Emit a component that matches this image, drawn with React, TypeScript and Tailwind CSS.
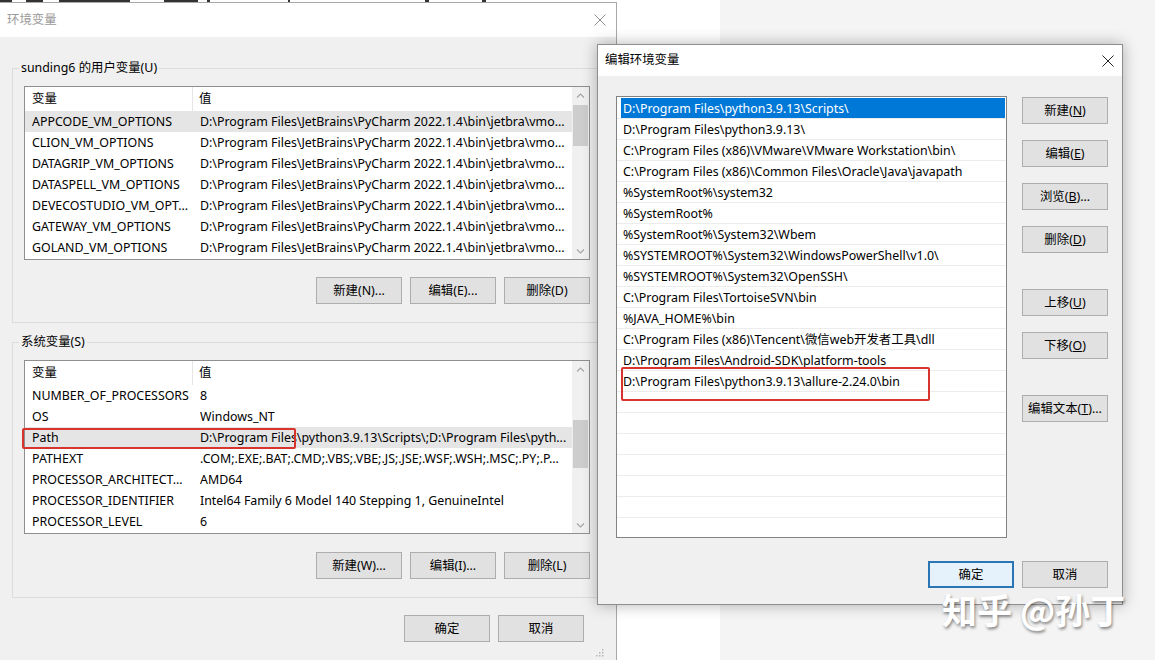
import React from "react";

const userRows: [string, string][] = [
  ["APPCODE_VM_OPTIONS", "D:\\Program Files\\JetBrains\\PyCharm 2022.1.4\\bin\\jetbra\\vmo..."],
  ["CLION_VM_OPTIONS", "D:\\Program Files\\JetBrains\\PyCharm 2022.1.4\\bin\\jetbra\\vmo..."],
  ["DATAGRIP_VM_OPTIONS", "D:\\Program Files\\JetBrains\\PyCharm 2022.1.4\\bin\\jetbra\\vmo..."],
  ["DATASPELL_VM_OPTIONS", "D:\\Program Files\\JetBrains\\PyCharm 2022.1.4\\bin\\jetbra\\vmo..."],
  ["DEVECOSTUDIO_VM_OPT...", "D:\\Program Files\\JetBrains\\PyCharm 2022.1.4\\bin\\jetbra\\vmo..."],
  ["GATEWAY_VM_OPTIONS", "D:\\Program Files\\JetBrains\\PyCharm 2022.1.4\\bin\\jetbra\\vmo..."],
  ["GOLAND_VM_OPTIONS", "D:\\Program Files\\JetBrains\\PyCharm 2022.1.4\\bin\\jetbra\\vmo..."],
];

const sysRows: [string, string][] = [
  ["NUMBER_OF_PROCESSORS", "8"],
  ["OS", "Windows_NT"],
  ["Path", "D:\\Program Files\\python3.9.13\\Scripts\\;D:\\Program Files\\pyth..."],
  ["PATHEXT", ".COM;.EXE;.BAT;.CMD;.VBS;.VBE;.JS;.JSE;.WSF;.WSH;.MSC;.PY;.P..."],
  ["PROCESSOR_ARCHITECT...", "AMD64"],
  ["PROCESSOR_IDENTIFIER", "Intel64 Family 6 Model 140 Stepping 1, GenuineIntel"],
  ["PROCESSOR_LEVEL", "6"],
];

const pathItems = [
  "D:\\Program Files\\python3.9.13\\Scripts\\",
  "D:\\Program Files\\python3.9.13\\",
  "C:\\Program Files (x86)\\VMware\\VMware Workstation\\bin\\",
  "C:\\Program Files (x86)\\Common Files\\Oracle\\Java\\javapath",
  "%SystemRoot%\\system32",
  "%SystemRoot%",
  "%SystemRoot%\\System32\\Wbem",
  "%SYSTEMROOT%\\System32\\WindowsPowerShell\\v1.0\\",
  "%SYSTEMROOT%\\System32\\OpenSSH\\",
  "C:\\Program Files\\TortoiseSVN\\bin",
  "%JAVA_HOME%\\bin",
  "C:\\Program Files (x86)\\Tencent\\微信web开发者工具\\dll",
  "D:\\Program Files\\Android-SDK\\platform-tools",
  "D:\\Program Files\\python3.9.13\\allure-2.24.0\\bin",
  "", "", "", "", "", "", "",
];

function CloseX({ color }: { color: string }) {
  return (
    <svg width="12" height="12" viewBox="0 0 12 12">
      <path d="M0.5 0.5 L11.5 11.5 M11.5 0.5 L0.5 11.5" stroke={color} strokeWidth="1" fill="none" />
    </svg>
  );
}

function Chevron({ down }: { down?: boolean }) {
  return (
    <svg width="9" height="6" viewBox="0 0 9 6">
      <path
        d={down ? "M1 1.5 L4.5 5 L8 1.5" : "M1 4.5 L4.5 1 L8 4.5"}
        stroke="#a3a3a3"
        strokeWidth="1.1"
        fill="none"
      />
    </svg>
  );
}

function Btn({ children, w = "w-[86px]" }: { children: React.ReactNode; w?: string }) {
  return (
    <div className={`flex h-[27px] ${w} items-center justify-center border border-[#adadad] bg-[#e1e1e1] pt-[2px] leading-none`}>
      {children}
    </div>
  );
}

function ListView({
  rows,
  hi,
  thumbTop,
  children,
}: {
  rows: [string, string][];
  hi: number;
  thumbTop: string;
  children?: React.ReactNode;
}) {
  return (
    <div className="relative flex h-[174px] border border-[#8f8f8f] bg-white">
      <div className="flex min-w-0 flex-1 flex-col">
        <div className="flex h-[24px] items-center">
          <div className="flex h-full w-[168px] items-center border-r border-[#e5e5e5] pl-[7px]">变量</div>
          <div className="pl-[6px]">值</div>
        </div>
        {rows.map(([a, b], i) => (
          <div key={i} className={`flex h-[21px] items-center pt-[2px] ${i === hi ? "bg-[#e5e5e5]" : ""}`}>
            <div className="w-[169px] shrink-0 overflow-hidden whitespace-nowrap pl-[7px]">{a}</div>
            <div className="min-w-0 flex-1 overflow-hidden whitespace-nowrap pl-[6px]">{b}</div>
          </div>
        ))}
      </div>
      <div className="flex w-[17px] flex-col bg-[#f0f0f0]">
        <div className="flex h-[17px] items-center justify-center">
          <Chevron />
        </div>
        <div className="flex-1">
          <div className={`mx-[1px] ${thumbTop} bg-[#cdcdcd]`} />
        </div>
        <div className="flex h-[17px] items-center justify-center">
          <Chevron down />
        </div>
      </div>
      {children}
    </div>
  );
}

function Group({ label, children, cls }: { label: string; children: React.ReactNode; cls: string }) {
  return (
    <div className={`relative w-[590px] border border-[#dcdcdc] px-[11px] pt-[17px] pb-[18px] ${cls}`}>
      <span className="absolute left-[6px] top-[-9px] bg-[#f0f0f0] px-[2px] leading-[16px]">{label}</span>
      {children}
    </div>
  );
}

export default function App() {
  return (
    <div className="relative flex h-[660px] w-[1155px] overflow-hidden font-['Noto_Sans','Noto_Sans_CJK_SC',sans-serif] text-[12.4px] text-black">
      <div className="w-[720px] bg-white" />
      <div className="flex-1 bg-[#f4f4f4]" />

      {/* desktop text remnants at the very top */}
      <div className="absolute left-0 top-0 flex h-[2px] w-[600px]">
        <div className="w-[12px] bg-[#333]" />
        <div className="ml-[14px] w-[17px] bg-[#333]" />
        <div className="ml-[16px] w-[71px] bg-[#333]" />
        <div className="ml-[34px] w-[34px] bg-[#333]" />
        <div className="ml-[9px] w-[3px] bg-[#333]" />
        <div className="ml-[78px] w-[2px] bg-[#333]" />
        <div className="ml-[135px] w-[4px] bg-[#333]" />
        <div className="ml-[53px] w-[4px] bg-[#333]" />
      </div>

      {/* Left dialog: 环境变量 */}
      <div className="absolute left-0 top-[2px] flex h-[658px] w-[617px] flex-col border-r border-t border-[#a8a8a8] bg-[#f0f0f0]">
        <div className="flex h-[34px] items-center justify-between bg-white pl-[7px] pr-[10px]">
          <span className="text-[#9a9a9a]">环境变量</span>
          <CloseX color="#8a8a8a" />
        </div>
        <div className="flex flex-1 flex-col px-[12px] pt-[31px]">
          <Group label="sunding6 的用户变量(U)" cls="">
            <ListView rows={userRows} hi={0} thumbTop="mt-[1px] h-[41px]" />
            <div className="mt-[17px] flex justify-end gap-[8px]">
              <Btn>新建(N)...</Btn>
              <Btn>编辑(E)...</Btn>
              <Btn>删除(D)</Btn>
            </div>
          </Group>
          <Group label="系统变量(S)" cls="mt-[19px]">
            <ListView rows={sysRows} hi={2} thumbTop="mt-[42px] h-[48px]">
              <div className="absolute left-[-3px] top-[67px] h-[21px] w-[274px] rounded-[2px] border-2 border-[#d8332c]" />
            </ListView>
            <div className="mt-[18px] flex justify-end gap-[8px]">
              <Btn>新建(W)...</Btn>
              <Btn>编辑(I)...</Btn>
              <Btn>删除(L)</Btn>
            </div>
          </Group>
          <div className="mt-[17px] flex w-[590px] justify-end gap-[8px] pr-[18px]">
            <Btn>确定</Btn>
            <Btn>取消</Btn>
          </div>
          <div className="mt-auto mb-[3px] flex justify-end">
            <svg width="8" height="8" viewBox="0 0 8 8">
              <rect x="6" y="0" width="1.5" height="1.5" fill="#b5b5b5" />
              <rect x="3" y="3" width="1.5" height="1.5" fill="#b5b5b5" />
              <rect x="6" y="3" width="1.5" height="1.5" fill="#b5b5b5" />
              <rect x="0" y="6" width="1.5" height="1.5" fill="#b5b5b5" />
              <rect x="3" y="6" width="1.5" height="1.5" fill="#b5b5b5" />
              <rect x="6" y="6" width="1.5" height="1.5" fill="#b5b5b5" />
            </svg>
          </div>
        </div>
      </div>

      {/* Right dialog: 编辑环境变量 */}
      <div className="absolute left-[597px] top-[44px] flex h-[561px] w-[526px] flex-col border border-[#8e8e8e] bg-[#f0f0f0] shadow-[0_0_14px_rgba(0,0,0,0.3)]">
        <div className="flex h-[31px] items-center justify-between bg-white pl-[7px] pr-[8px]">
          <span>编辑环境变量</span>
          <CloseX color="#222" />
        </div>
        <div className="flex flex-col pl-[18px] pr-[14px] pt-[20px]">
          <div className="flex gap-[15px]">
            <div className="relative h-[442px] w-[391px] overflow-hidden border border-[#828282] bg-white pt-[1px]">
              {pathItems.map((t, i) => (
                <div key={i} className="h-[21px] border-b border-[#ececec]">
                  <div
                    className={`ml-[4px] mr-[1px] flex h-[20px] items-center whitespace-nowrap pl-[2px] pt-[2px] ${
                      i === 0 ? "bg-[#0078d7] text-white" : ""
                    }`}
                  >
                    {t}
                  </div>
                </div>
              ))}
              <div className="absolute left-[4px] top-[270px] h-[34px] w-[309px] rounded-[2px] border-2 border-[#d8332c]" />
            </div>
            <div className="flex flex-col pt-[1px]">
              <Btn>
                新建(<span className="underline">N</span>)
              </Btn>
              <div className="mt-[16px]">
                <Btn>
                  编辑(<span className="underline">E</span>)
                </Btn>
              </div>
              <div className="mt-[16px]">
                <Btn>
                  浏览(<span className="underline">B</span>)...
                </Btn>
              </div>
              <div className="mt-[16px]">
                <Btn>
                  删除(<span className="underline">D</span>)
                </Btn>
              </div>
              <div className="mt-[36px]">
                <Btn>
                  上移(<span className="underline">U</span>)
                </Btn>
              </div>
              <div className="mt-[16px]">
                <Btn>
                  下移(<span className="underline">O</span>)
                </Btn>
              </div>
              <div className="mt-[36px]">
                <Btn>
                  编辑文本(<span className="underline">T</span>)...
                </Btn>
              </div>
            </div>
          </div>
          <div className="mt-[23px] flex justify-end gap-[8px]">
            <div className="flex h-[27px] w-[86px] items-center justify-center border-2 border-[#2a76b5] bg-[#e5f1fb] pt-[2px] leading-none">
              确定
            </div>
            <Btn>取消</Btn>
          </div>
        </div>
      </div>

      {/* Watermark */}
      <div className="absolute left-[942px] top-[589px] font-['Noto_Sans_CJK_SC',sans-serif] text-[35px] font-bold leading-[40px] text-white [text-shadow:1px_2px_3px_rgba(0,0,0,0.45)]">
        知乎 @孙丁
      </div>
    </div>
  );
}
